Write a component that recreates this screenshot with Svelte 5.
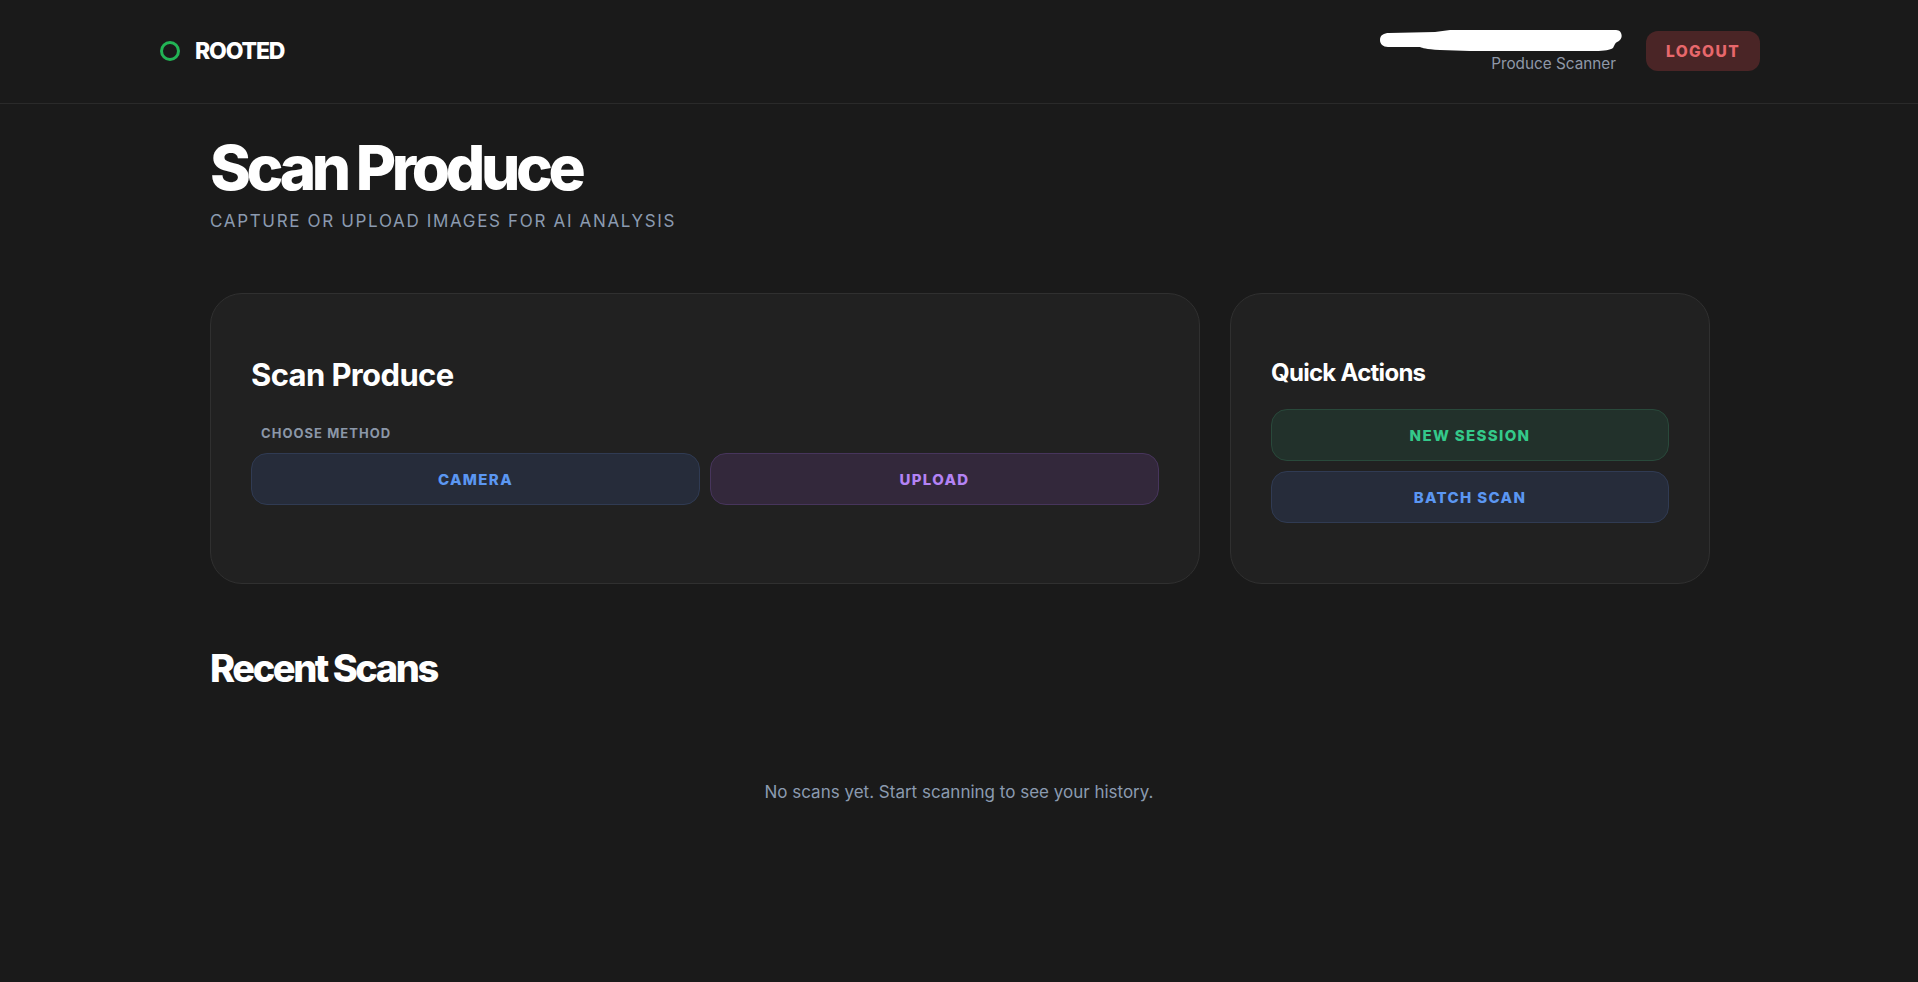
<script>
  const methods = [
    { label: 'Camera', tone: 'blue' },
    { label: 'Upload', tone: 'purple' }
  ];
  const actions = [
    { label: 'New Session', tone: 'green' },
    { label: 'Batch Scan', tone: 'blue' }
  ];
</script>

<header class="topbar">
  <div class="brand">
    <span class="brand__ring"></span>
    <span class="brand__name">ROOTED</span>
  </div>
  <div class="account">
    <div class="user">
      <svg class="user__mark" width="242" height="21" viewBox="0 0 242 21" aria-hidden="true">
        <path d="M0 10C0 5 4 3 9 3L55 2L70 0L236 0C242 0 243 7 240 10C238 12 236 12 235 14L233 18C230 20 225 21 215 21L90 21L60 20C45 19 43 18 40 17L8 17C3 17 0 14 0 10Z" fill="#fff" />
      </svg>
      <span class="user__role">Produce Scanner</span>
    </div>
    <button class="logout" type="button">Logout</button>
  </div>
</header>

<main class="page">
  <h1 class="page__title">Scan Produce</h1>
  <p class="page__sub">Capture or upload images for AI analysis</p>

  <div class="cards">
    <section class="card">
      <h2 class="card__title card__title--lg">Scan Produce</h2>
      <div class="card__label">Choose Method</div>
      <div class="methods">
        {#each methods as m}
          <button class="btn btn--{m.tone}" type="button">{m.label}</button>
        {/each}
      </div>
    </section>

    <section class="card">
      <h2 class="card__title">Quick Actions</h2>
      <div class="actions">
        {#each actions as a}
          <button class="btn btn--{a.tone}" type="button">{a.label}</button>
        {/each}
      </div>
    </section>
  </div>

  <h2 class="recent">Recent Scans</h2>
  <p class="empty">No scans yet. Start scanning to see your history.</p>
</main>

<style>
  :global(body) {
    background: #1a1a1a;
    color: #fff;
    font-family: Inter, "Liberation Sans", sans-serif;
    min-height: 982px;
  }

  button {
    font-family: inherit;
    cursor: pointer;
  }

  .topbar {
    display: flex;
    align-items: center;
    justify-content: space-between;
    height: 103px;
    padding: 0 158px 0 160px;
    border-bottom: 1px solid #2a2a2a;
  }

  .brand {
    display: flex;
    align-items: center;
    gap: 15px;
    margin-top: -1px;
  }

  .brand__ring {
    width: 20px;
    height: 20px;
    box-sizing: border-box;
    border: 3.5px solid #22b455;
    border-radius: 50%;
  }

  .brand__name {
    font-size: 23px;
    font-weight: 800;
    letter-spacing: -0.05em;
  }

  .account {
    display: flex;
    align-items: center;
    gap: 30px;
    margin-top: -1px;
  }

  .user {
    display: flex;
    flex-direction: column;
    align-items: flex-end;
    padding-top: 1px;
  }

  .user__mark {
    display: block;
    margin-right: -6px;
    margin-bottom: 3px;
  }

  .user__role {
    font-size: 15.3px;
    line-height: 20px;
    font-weight: 400;
    color: #8f98a8;
  }

  .logout {
    width: 114px;
    height: 40px;
    padding: 0;
    border: none;
    border-radius: 12px;
    background: #4a2526;
    color: #e8686c;
    font-size: 15.5px;
    font-weight: 800;
    letter-spacing: 0.09em;
    text-transform: uppercase;
  }

  .page {
    width: 1498px;
    margin: 0 auto;
  }

  .page__title {
    margin: 28px 0 0;
    font-size: 62px;
    line-height: 72px;
    font-weight: 800;
    letter-spacing: -0.071em;
  }

  .page__sub {
    margin: 5px 0 0;
    font-size: 17px;
    line-height: 24px;
    font-weight: 400;
    letter-spacing: 0.098em;
    text-transform: uppercase;
    color: #8b9ab0;
  }

  .cards {
    display: grid;
    grid-template-columns: 990px 480px;
    gap: 30px;
    margin-top: 60px;
    height: 291px;
  }

  .card {
    box-sizing: border-box;
    padding: 60px 40px 0 40px;
    background: #212121;
    border: 1px solid #303030;
    border-radius: 32px;
  }

  .card__title {
    margin: 0 0 17px;
    font-size: 24px;
    line-height: 38px;
    font-weight: 700;
    letter-spacing: -0.03em;
  }

  .card__title--lg {
    margin: 0 0 28px;
    font-size: 31px;
    line-height: 42px;
    letter-spacing: -0.02em;
  }

  .card__label {
    margin: 0 0 11px 10px;
    font-size: 13px;
    line-height: 18px;
    font-weight: 700;
    letter-spacing: 0.08em;
    text-transform: uppercase;
    color: #8b97a8;
  }

  .methods {
    display: grid;
    grid-template-columns: 1fr 1fr;
    gap: 10px;
  }

  .actions {
    display: flex;
    flex-direction: column;
    gap: 10px;
  }

  .btn {
    height: 52px;
    border-radius: 16px;
    font-size: 15px;
    font-weight: 800;
    letter-spacing: 0.09em;
    text-transform: uppercase;
  }

  .btn--blue { background: #262c3a; border: 1px solid #303b53; color: #5b97f2; }
  .btn--purple { background: #33283b; border: 1px solid #47355c; color: #b483f5; }
  .btn--green { background: #22312b; border: 1px solid #29493b; color: #34c98a; }

  .recent {
    margin: 60px 0 0;
    font-size: 38px;
    line-height: 48px;
    font-weight: 800;
    letter-spacing: -0.065em;
  }

  .empty {
    margin: 88px 0 0;
    text-align: center;
    font-size: 17px;
    line-height: 24px;
    font-weight: 400;
    color: #8b9ab0;
  }
</style>
